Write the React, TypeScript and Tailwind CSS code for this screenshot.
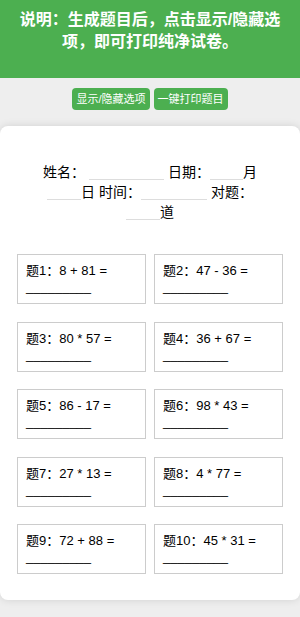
const questions = [
  '8 + 81',
  '47 - 36',
  '80 * 57',
  '36 + 67',
  '86 - 17',
  '98 * 43',
  '27 * 13',
  '4 * 77',
  '72 + 88',
  '45 * 31',
];

const font = { fontFamily: '"Liberation Sans", "Noto Sans CJK SC", sans-serif' };

function Blank({ w }: { w: string }) {
  return <span className={`inline-block ${w} border-b border-[#dddddd] align-[-3px]`} />;
}

export default function App() {
  return (
    <div className="min-h-screen bg-[#eeeeee]" style={font}>
      {/* 说明 */}
      <div className="bg-[#4caf50] px-[15px] pt-[9px] pb-[25px] text-center text-[16px] font-bold leading-[22px] text-white">
        说明：生成题目后，点击显示/隐藏选项，即可打印纯净试卷。
      </div>

      <div className="flex justify-center gap-1 pt-[10px] pb-[16px]">
        <button className="rounded bg-[#4caf50] px-1 py-1 text-[11px] leading-[14px] text-white">显示/隐藏选项</button>
        <button className="rounded bg-[#4caf50] px-1 py-1 text-[11px] leading-[14px] text-white">一键打印题目</button>
      </div>

      <div className="rounded-lg bg-white px-[17px] pt-[36px] pb-[26px] shadow-[0_0_8px_rgba(0,0,0,0.12)]">
        <p className="mx-auto w-[230px] text-center text-[14px] leading-[20px] text-black">
          姓名： <Blank w="w-[75px]" /> 日期：<Blank w="w-[33px]" />月<Blank w="w-[34px]" />日 时间：<Blank w="w-[66px]" /> 对题：<Blank w="w-[34px]" />道
        </p>

        <div className="mt-[32px] grid grid-cols-2 gap-x-2 gap-y-[17.5px]">
          {questions.map((q, i) => (
            <div key={i} className="h-[50px] border border-[#cccccc] p-2 text-[13px] leading-4 text-black">
              题{i + 1}：{q} = _________
            </div>
          ))}
        </div>
      </div>
    </div>
  );
}
